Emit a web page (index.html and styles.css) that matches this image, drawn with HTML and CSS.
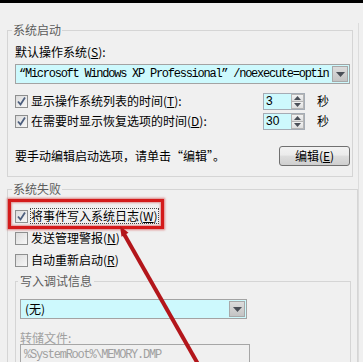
FILE: index.html
```html
<!DOCTYPE html>
<html lang="zh">
<head>
<meta charset="utf-8">
<link rel="stylesheet" href="styles.css">
</head>
<body>
<div class="topbar"></div>
<div class="page">
  <fieldset class="group g1">
    <legend>系统启动</legend>
    <div class="label">默认操作系统(<u>S</u>):</div>
    <div class="combo wide">
      <span class="combo-text mono">“Microsoft Windows XP Professional” /noexecute=optin</span>
      <span class="drop"><svg width="9" height="5" viewBox="0 0 9 5"><path d="M0 0H9L4.5 5Z" fill="#4a4f57"/></svg></span>
    </div>
    <div class="row spinrow first">
      <span class="check on"><svg width="11" height="11" viewBox="0 0 11 11"><path d="M2 5.5L4.5 8.5L9 1.5" fill="none" stroke="#4d5f7e" stroke-width="1.8"/></svg></span>
      <span class="text">显示操作系统列表的时间(<u>T</u>):</span>
      <span class="spin"><span class="spin-val">3</span><span class="spin-btns"><span class="sb"><svg width="7" height="4" viewBox="0 0 7 4"><path d="M0 4H7L3.5 0Z" fill="#4a4f57"/></svg></span><span class="sb"><svg width="7" height="4" viewBox="0 0 7 4"><path d="M0 0H7L3.5 4Z" fill="#4a4f57"/></svg></span></span></span>
      <span class="unit">秒</span>
    </div>
    <div class="row spinrow second">
      <span class="check on"><svg width="11" height="11" viewBox="0 0 11 11"><path d="M2 5.5L4.5 8.5L9 1.5" fill="none" stroke="#4d5f7e" stroke-width="1.8"/></svg></span>
      <span class="text">在需要时显示恢复选项的时间(<u>D</u>):</span>
      <span class="spin"><span class="spin-val">30</span><span class="spin-btns"><span class="sb"><svg width="7" height="4" viewBox="0 0 7 4"><path d="M0 4H7L3.5 0Z" fill="#4a4f57"/></svg></span><span class="sb"><svg width="7" height="4" viewBox="0 0 7 4"><path d="M0 0H7L3.5 4Z" fill="#4a4f57"/></svg></span></span></span>
      <span class="unit">秒</span>
    </div>
    <div class="row editrow">
      <span class="text">要手动编辑启动选项，请单击“编辑”。</span>
      <span class="button">编辑(<u>E</u>)</span>
    </div>
  </fieldset>

  <fieldset class="group g2">
    <legend>系统失败</legend>
    <div class="row cbrow w">
      <span class="check on"><svg width="11" height="11" viewBox="0 0 11 11"><path d="M2 5.5L4.5 8.5L9 1.5" fill="none" stroke="#4d5f7e" stroke-width="1.8"/></svg></span>
      <span class="text focus">将事件写入系统日志(<u>W</u>)</span>
      <span class="highlight"></span>
    </div>
    <div class="row cbrow">
      <span class="check"></span>
      <span class="text">发送管理警报(<u>N</u>)</span>
    </div>
    <div class="row cbrow">
      <span class="check"></span>
      <span class="text">自动重新启动(<u>R</u>)</span>
    </div>
    <fieldset class="group sub">
      <legend>写入调试信息</legend>
      <div class="combo small">
        <span class="combo-text">(无)</span>
        <span class="drop"><svg width="9" height="5" viewBox="0 0 9 5"><path d="M0 0H9L4.5 5Z" fill="#4a4f57"/></svg></span>
      </div>
      <div class="label disabled dump">转储文件:</div>
      <div class="textbox mono">%SystemRoot%\MEMORY.DMP</div>
    </fieldset>
  </fieldset>
</div>
<svg class="arrow" width="363" height="362" viewBox="0 0 363 362">
  <line x1="124" y1="234" x2="198" y2="364" stroke="#b3161b" stroke-width="4"/>
  <path d="M120 226L128.5 232.7L121.5 236.7Z" fill="#b3161b"/>
</svg>
</body>
</html>
```
FILE: styles.css
```css
html, body {
  margin: 0;
  padding: 0;
}
body {
  width: 363px;
  height: 362px;
  overflow: hidden;
  background: #f0f0f0;
  font-family: "Noto Sans CJK SC", "Liberation Sans", sans-serif;
  font-size: 12px;
  line-height: 14px;
  color: #000;
  position: relative;
}
u { text-decoration: underline; text-underline-offset: 1px; }
.topbar {
  height: 3px;
  background: #000;
}
.page {
  margin: 20px 0 0 7px;
  width: 352px;
  box-sizing: border-box;
  border-right: 1px solid #dcdcdc;
  min-height: 400px;
}
.group {
  margin: 0;
  border: 1px solid #d5d5d5;
  min-inline-size: 0;
  box-sizing: border-box;
}
.group legend {
  padding: 0 1px;
  margin-left: -3px;
  line-height: 14px;
  color: #5c5c5c;
}
.g1 {
  width: 346px;
  padding: 0 2px 10px 7px;
}
.g2 {
  margin-top: 5px;
  width: 351px;
  padding: 0 6px 0 7px;
  border-bottom: none;
}
.sub {
  margin-top: 5px;
  padding: 0 0 0 4px;
  border-bottom: none;
}
.sub legend {
  margin-left: -2px;
  padding: 0 2px;
}
.label { margin-top: 8px; }
.mono {
  font-family: "Liberation Mono", "DejaVu Sans Mono", monospace;
  font-size: 12px;
  letter-spacing: -1.25px;
}
.combo {
  display: flex;
  align-items: stretch;
  height: 20px;
  box-sizing: border-box;
  border: 1px solid #a3a3a3;
  background: #cdf9fd;
}
.combo.wide { margin-top: 5px; }
.combo.small { margin-top: 11px; width: 227px; }
.combo-text {
  flex: 1;
  padding-left: 4px;
  line-height: 18px;
  white-space: nowrap;
  overflow: hidden;
}
.wide .combo-text { padding-left: 3px; }
.drop {
  width: 14px;
  margin: 1px;
  border: 1px solid #a8a8a8;
  background: linear-gradient(#dcdcdc, #c4c4c4);
  display: flex;
  align-items: center;
  justify-content: center;
  flex: none;
}
.row {
  display: flex;
  align-items: center;
  height: 18px;
}
.spinrow.first { margin-top: 8px; }
.spinrow.second { margin-top: 2px; }
.spinrow .text { flex: 1; }
.check {
  width: 13px;
  height: 13px;
  box-sizing: border-box;
  border: 1px solid #8e8f8f;
  background: linear-gradient(135deg, #dcdcdc, #f7f7f7);
  margin-right: 3px;
  display: flex;
  align-items: center;
  justify-content: center;
  flex: none;
}
.spin {
  display: flex;
  width: 42px;
  height: 17px;
  box-sizing: border-box;
  border: 1px solid #a5acb5;
  background: #cdf9fd;
}
.spin-val {
  flex: 1;
  padding-left: 2px;
  line-height: 15px;
  font-family: "Liberation Sans", sans-serif;
}
.spin-btns {
  width: 13px;
  display: flex;
  flex-direction: column;
  background: #f0f0f0;
}
.sb {
  flex: 1;
  border: 1px solid #b5b5b5;
  background: linear-gradient(#f2f2f2, #dedede);
  display: flex;
  align-items: center;
  justify-content: center;
}
.sb + .sb { border-top: none; }
.unit {
  width: 45px;
  padding-left: 12px;
  box-sizing: border-box;
}
.editrow {
  margin-top: 16px;
  height: 20px;
  justify-content: space-between;
}
.button {
  width: 71px;
  height: 20px;
  box-sizing: border-box;
  border: 1px solid #707070;
  border-radius: 3px;
  background: linear-gradient(#f2f2f2 0%, #ebebeb 45%, #dddddd 50%, #cfcfcf 100%);
  text-align: center;
  line-height: 18px;
}
.cbrow { position: relative; margin-top: 4px; }
.cbrow.w { margin-top: 11px; }
.focus { outline: 1px dotted #444; outline-offset: 0; }
.highlight {
  position: absolute;
  left: -7px;
  top: -8px;
  width: 156px;
  height: 30px;
  box-sizing: border-box;
  border: 3px solid #d41b1b;
  box-shadow: 0 0 2px 1px rgba(200, 20, 20, 0.5), inset 0 0 2px 1px rgba(200, 20, 20, 0.4);
}
.disabled { color: #a0a0a0; }
.label.dump { margin-top: 13px; line-height: 12px; }
.textbox {
  width: 230px;
  height: 22px;
  box-sizing: border-box;
  border: 1px solid #a6a6a6;
  color: #a0a0a0;
  padding: 2px 0 0 3px;
  line-height: 16px;
}
.arrow {
  position: absolute;
  left: 0;
  top: 0;
  pointer-events: none;
}
```
